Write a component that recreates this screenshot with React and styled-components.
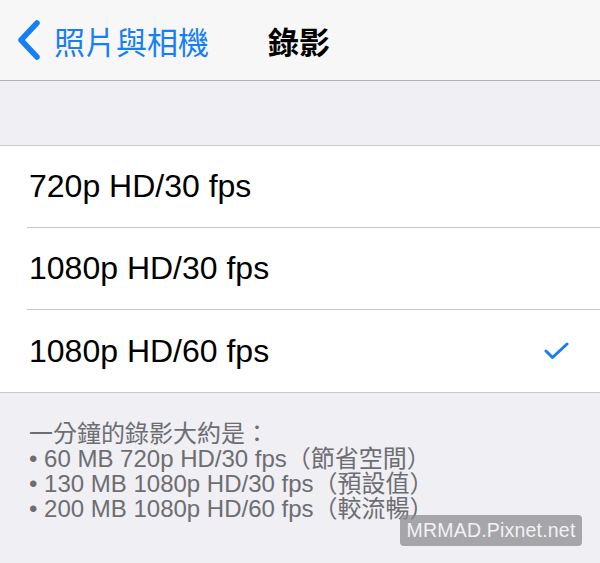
import React from 'react'
import styled, { createGlobalStyle } from 'styled-components'

const blue = '#167ef6'
const groupBg = '#efeff4'
const hairline = '#c8c7cc'

const GlobalStyle = createGlobalStyle`
  html, body {
    margin: 0;
    padding: 0;
    background: ${groupBg};
  }
  body {
    font-family: 'Liberation Sans', 'Noto Sans CJK TC', sans-serif;
  }
`

const Page = styled.div`
  position: relative;
  width: 600px;
  height: 563px;
  overflow: hidden;
  background: ${groupBg};
`

const NavBar = styled.div`
  display: flex;
  align-items: center;
  height: 80px;
  padding-left: 16px;
  background: #f7f7f8;
  border-bottom: 1px solid #b4b4b8;
`

const BackButton = styled.div`
  display: flex;
  align-items: center;
  gap: 13px;
  color: ${blue};
  font-family: 'Noto Sans CJK TC', sans-serif;
  font-size: 31px;
  line-height: 1;
  width: 252px;
`

const NavTitle = styled.div`
  color: #000;
  font-family: 'Noto Sans CJK TC', sans-serif;
  font-size: 31px;
  font-weight: 700;
  line-height: 1;
`

const Spacer = styled.div`
  height: 64px;
  border-bottom: 1px solid ${hairline};
`

const Group = styled.div`
  background: #fff;
  border-bottom: 1px solid ${hairline};
`

const Row = styled.div`
  display: flex;
  align-items: center;
  justify-content: space-between;
  height: ${p => (p.last ? '82px' : '81px')};
  margin-left: 27px;
  padding-right: 31px;
  padding-left: 2px;
  border-bottom: ${p => (p.last ? 'none' : `1px solid ${hairline}`)};
  font-size: 32px;
  color: #000;
`

const Footer = styled.div`
  padding: 28px 29px 0;
  color: #6d6d72;
  font-size: 24px;
  line-height: 25px;
`

const Watermark = styled.div`
  position: absolute;
  left: 400px;
  top: 515px;
  width: 182px;
  height: 31px;
  display: flex;
  align-items: center;
  justify-content: center;
  border-radius: 4px;
  background: rgba(140, 140, 146, 0.75);
  color: #f2f2f2;
  font-size: 19.5px;
  letter-spacing: 0.2px;
`

const Chevron = () => (
  <svg width="25" height="40" viewBox="0 0 25 40">
    <path d="M21 3 L5 20 L21 37" fill="none" stroke={blue} strokeWidth="5.5" strokeLinecap="round" strokeLinejoin="round" />
  </svg>
)

const Check = () => (
  <svg width="25" height="18" viewBox="0 0 25 18">
    <path d="M2 9 L8.5 15.5 L23 2" fill="none" stroke={blue} strokeWidth="3" strokeLinecap="round" strokeLinejoin="round" />
  </svg>
)

const options = [
  { label: '720p HD/30 fps' },
  { label: '1080p HD/30 fps' },
  { label: '1080p HD/60 fps', selected: true },
]

export default function App() {
  return (
    <Page>
      <GlobalStyle />
      <NavBar>
        <BackButton>
          <Chevron />
          <span>照片與相機</span>
        </BackButton>
        <NavTitle>錄影</NavTitle>
      </NavBar>
      <Spacer />
      <Group>
        {options.map((o, i) => (
          <Row key={o.label} last={i === options.length - 1}>
            <span>{o.label}</span>
            {o.selected && <Check />}
          </Row>
        ))}
      </Group>
      <Footer>
        <div>一分鐘的錄影大約是：</div>
        <div>• 60 MB 720p HD/30 fps（節省空間）</div>
        <div>• 130 MB 1080p HD/30 fps（預設值）</div>
        <div>• 200 MB 1080p HD/60 fps（較流暢）</div>
      </Footer>
      <Watermark>MRMAD.Pixnet.net</Watermark>
    </Page>
  )
}
